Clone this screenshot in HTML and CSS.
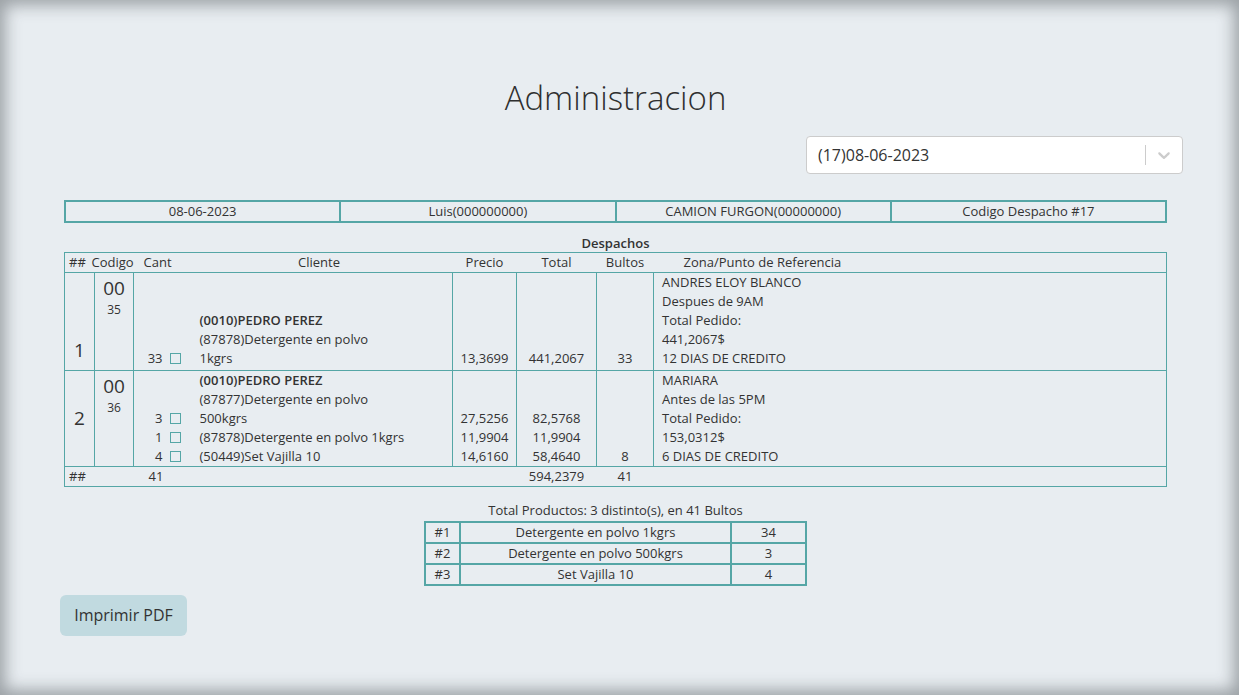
FILE: index.html
```html
<!DOCTYPE html>
<html>
<head>
  <title>Administracion</title>
  <link rel="stylesheet" href="styles.css">
</head>
<body>
  <div class="page">

    <h1 class="title">Administracion</h1>

    <!-- selector de despacho -->
    <div class="select-row">
      <div class="select">
        <div class="select-value">(17)08-06-2023</div>
        <span class="select-sep"></span>
        <div class="select-arrow">
          <svg width="20" height="20" viewBox="0 0 20 20"><path d="M4.516 7.548c0.436-0.446 1.043-0.481 1.576 0l3.908 3.747 3.908-3.747c0.533-0.481 1.141-0.446 1.574 0 0.436 0.445 0.408 1.197 0 1.615-0.406 0.418-4.695 4.502-4.695 4.502-0.217 0.223-0.502 0.335-0.787 0.335s-0.57-0.112-0.789-0.335c0 0-4.287-4.084-4.695-4.502s-0.436-1.170 0-1.615z"></path></svg>
        </div>
      </div>
    </div>

    <!-- datos del despacho -->
    <table class="info">
      <tr>
        <td>08-06-2023</td>
        <td>Luis(000000000)</td>
        <td>CAMION FURGON(00000000)</td>
        <td>Codigo Despacho #17</td>
      </tr>
    </table>

    <div class="caption">Despachos</div>

    <table class="head">
      <tr>
        <th class="h-num">##</th>
        <th class="h-cod">Codigo</th>
        <th class="h-cant">Cant</th>
        <th class="h-cli">Cliente</th>
        <th class="h-pre">Precio</th>
        <th class="h-tot">Total</th>
        <th class="h-bul">Bultos</th>
        <th class="h-zona">Zona/Punto de Referencia</th>
      </tr>
    </table>

    <table class="despachos">
      <colgroup>
        <col class="c-num">
        <col class="c-cod">
        <col class="c-cant">
        <col class="c-cli">
        <col class="c-pre">
        <col class="c-tot">
        <col class="c-bul">
        <col>
      </colgroup>
      <tr class="row-first">
        <td class="num num-low">1</td>
        <td class="cod"><div class="cod-big">00</div><div class="cod-small">35</div></td>
        <td class="cant">
          <div>33<span class="check"></span></div>
        </td>
        <td class="cli">
          <div class="cli-name">(0010)PEDRO PEREZ</div>
          <div>(87878)Detergente en polvo</div>
          <div>1kgrs</div>
        </td>
        <td class="money"><div>13,3699</div></td>
        <td class="money"><div>441,2067</div></td>
        <td class="bultos">33</td>
        <td class="zona">
          <div>ANDRES ELOY BLANCO</div>
          <div>Despues de 9AM</div>
          <div>Total Pedido:</div>
          <div>441,2067$</div>
          <div>12 DIAS DE CREDITO</div>
        </td>
      </tr>
      <tr>
        <td class="num">2</td>
        <td class="cod"><div class="cod-big">00</div><div class="cod-small">36</div></td>
        <td class="cant">
          <div>3<span class="check"></span></div>
          <div>1<span class="check"></span></div>
          <div>4<span class="check"></span></div>
        </td>
        <td class="cli">
          <div class="cli-name">(0010)PEDRO PEREZ</div>
          <div>(87877)Detergente en polvo</div>
          <div>500kgrs</div>
          <div>(87878)Detergente en polvo 1kgrs</div>
          <div>(50449)Set Vajilla 10</div>
        </td>
        <td class="money">
          <div>27,5256</div>
          <div>11,9904</div>
          <div>14,6160</div>
        </td>
        <td class="money">
          <div>82,5768</div>
          <div>11,9904</div>
          <div>58,4640</div>
        </td>
        <td class="bultos">8</td>
        <td class="zona">
          <div>MARIARA</div>
          <div>Antes de las 5PM</div>
          <div>Total Pedido:</div>
          <div>153,0312$</div>
          <div>6 DIAS DE CREDITO</div>
        </td>
      </tr>
      <tr class="foot">
        <td colspan="2" class="foot-label">##</td>
        <td class="foot-cant">41</td>
        <td></td>
        <td></td>
        <td class="center">594,2379</td>
        <td class="center">41</td>
        <td></td>
      </tr>
    </table>

    <!-- resumen de productos -->
    <div class="caption total-caption">Total Productos: 3 distinto(s), en 41 Bultos</div>
    <table class="resumen">
      <tr><td class="r-num">#1</td><td class="r-name">Detergente en polvo 1kgrs</td><td class="r-qty">34</td></tr>
      <tr><td class="r-num">#2</td><td class="r-name">Detergente en polvo 500kgrs</td><td class="r-qty">3</td></tr>
      <tr><td class="r-num">#3</td><td class="r-name">Set Vajilla 10</td><td class="r-qty">4</td></tr>
    </table>

    <button class="pdf-btn">Imprimir PDF</button>

  </div>
</body>
</html>
```

FILE: styles.css
```css
* {
  box-sizing: border-box;
  margin: 0;
  padding: 0;
}

html, body {
  height: 100%;
}

body {
  font-family: "Open Sans", Arial, sans-serif;
  color: #333;
  background-color: #e8edf1;
}

/* fondo con la sombra de los bordes */
.page {
  min-height: 100vh;
  padding: 78px 72px 0 64px;
  box-shadow: inset 0 0 16px 5px rgba(60, 66, 72, 0.45);
}

.title {
  font-size: 33px;
  font-weight: 300;
  line-height: 40px;
  text-align: center;
  color: #2f2f2f;
}

/* --- select --- */
.select-row {
  display: flex;
  justify-content: flex-end;
  margin-top: 18px;
  margin-right: -16px;
}

.select {
  display: flex;
  align-items: center;
  width: 377px;
  height: 38px;
  background: white;
  border: 1px solid #cccccc;
  border-radius: 4px;
}

.select-value {
  flex: 1;
  padding-left: 11px;
  font-size: 16px;
  color: #333;
}

.select-sep {
  width: 1px;
  align-self: stretch;
  margin: 8px 0;
  background: #cccccc;
}

.select-arrow {
  display: flex;
  padding: 8px;
}

.select-arrow svg {
  fill: #cccccc;
}

/* --- tabla de datos --- */
table {
  width: 100%;
  border-collapse: collapse;
  font-size: 13px;
}

.info {
  margin-top: 26px;
  table-layout: fixed;
  border: 2px solid #55a6a6;
}

.info td {
  border: 2px solid #55a6a6;
  text-align: center;
  height: 21px;
  padding: 0;
  line-height: 17px;
}

.caption {
  margin-top: 12px;
  text-align: center;
  font-size: 13px;
  font-weight: 600;
  line-height: 17px;
}

/* --- encabezado --- */
.head {
  table-layout: fixed;
  border: 1px solid #55a6a6;
  border-bottom: none;
}

.head th {
  font-weight: 400;
  height: 19px;
  line-height: 17px;
  padding: 0;
}

.h-num { width: 27px; text-align: left; padding-left: 4px !important; }
.h-cod { width: 50px; text-align: left; }
.h-cant { width: 44px; text-align: left; padding-left: 2px !important; }
.h-cli { width: 267px; }
.h-pre { width: 64px; }
.h-tot { width: 80px; }
.h-bul { width: 57px; }
.h-zona { text-align: left; padding-left: 30px !important; }

/* --- despachos --- */
.c-num { width: 30px; }
.c-cod { width: 39px; }
.c-cant { width: 57px; }
.c-cli { width: 262px; }
.c-pre { width: 64px; }
.c-tot { width: 80px; }
.c-bul { width: 57px; }

.despachos {
  table-layout: fixed;
  border: 1px solid #55a6a6;
}

.despachos td {
  border-top: 1px solid #55a6a6;
  border-left: 1px solid #55a6a6;
  line-height: 19px;
  vertical-align: bottom;
  padding: 0;
}

.despachos .row-first td {
  padding-bottom: 2px;
}

.despachos .num {
  font-size: 19px;
  text-align: center;
  vertical-align: middle;
}

.despachos .row-first .num-low {
  vertical-align: bottom;
  padding-bottom: 10px;
}

.despachos .cod {
  text-align: center;
  vertical-align: top;
  padding-top: 3px;
}

.cod-big {
  font-size: 19px;
  line-height: 24px;
}

.cod-small {
  font-size: 12px;
  line-height: 20px;
}

.despachos .cant {
  text-align: right;
  padding-right: 10px;
}

.check {
  display: inline-block;
  width: 11px;
  height: 11px;
  margin-left: 7px;
  border: 1px solid #55a6a6;
  vertical-align: -1px;
}

.despachos .cli {
  border-left: none;
  padding-left: 9px;
}

.cli-name {
  font-weight: 600;
}

.despachos .money,
.despachos .bultos,
.center {
  text-align: center;
}

.despachos .zona {
  vertical-align: top;
  padding-left: 8px;
}

.despachos .foot td {
  border-left: none;
  height: 20px;
  padding: 0;
  vertical-align: middle;
}

.foot-label {
  padding-left: 4px !important;
}

.foot-cant {
  padding-left: 15px !important;
}

/* --- resumen --- */
.total-caption {
  margin-top: 15px;
  font-weight: 400;
}

.resumen {
  width: 383px;
  margin: 2px auto 0;
  table-layout: fixed;
  border: 2px solid #55a6a6;
}

.resumen td {
  border: 2px solid #55a6a6;
  text-align: center;
  height: 21px;
  padding: 0;
  line-height: 17px;
}

.r-num { width: 35px; }
.r-qty { width: 75px; }

.pdf-btn {
  margin-top: 9px;
  margin-left: -4px;
  padding: 0 12px;
  height: 41px;
  width: 127px;
  border: none;
  border-radius: 6px;
  background-color: #c1dae0;
  color: #333;
  font-family: "Open Sans", Arial, sans-serif;
  font-size: 16px;
  cursor: pointer;
}
```
